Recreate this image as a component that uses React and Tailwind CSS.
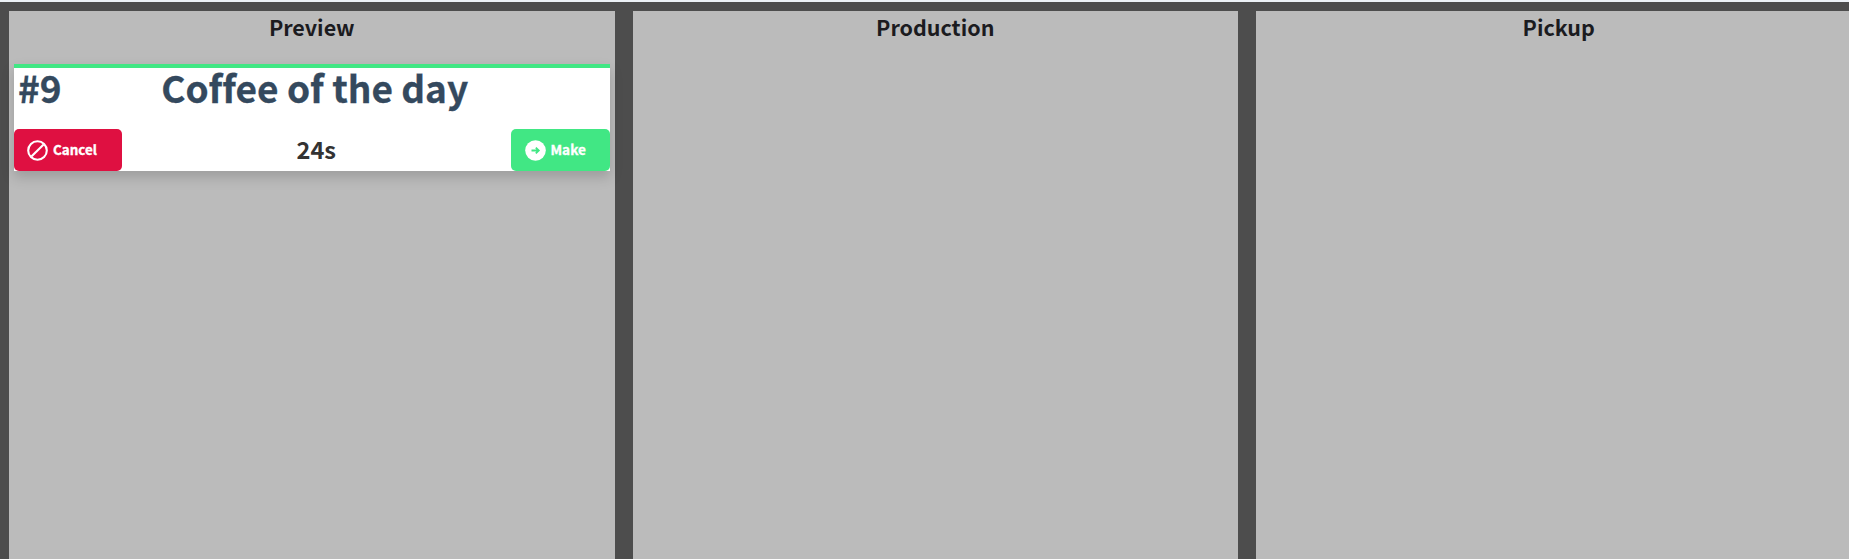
function CancelIcon() {
  return (
    <svg className="size-[21px] shrink-0" viewBox="0 0 21 21" fill="none" stroke="white" strokeWidth="2.1">
      <circle cx="10.5" cy="10.5" r="9.3" />
      <path d="M4.4 16.6 16.6 4.4" />
    </svg>
  );
}

function MakeIcon() {
  return (
    <svg className="size-[21px] shrink-0" viewBox="0 0 21 21" fill="none">
      <circle cx="10.5" cy="10.5" r="10.3" fill="white" />
      <path d="M6.5 10.5h7M10.8 7.6l3 2.9-3 2.9" stroke="#41e784" strokeWidth="1.8" />
    </svg>
  );
}

function Column({ title, children }) {
  return (
    <section className="w-[605.5px] shrink-0 bg-[#bbbbbb] px-[5px]">
      <h2 className="h-[53px] text-center text-[21.5px] leading-[31px] font-bold text-[#1b1b1f]">{title}</h2>
      {children}
    </section>
  );
}

function OrderCard() {
  return (
    <article className="h-[107px] border-t-4 border-[#41e784] bg-white shadow-[0_6px_12px_rgba(0,0,0,0.17)]">
      <div className="flex h-[61px] px-[4px] text-[37px] leading-[38px] font-bold text-[#34495e] [-webkit-text-stroke:0.3px_#34495e]">
        <span className="w-[55px]">#9</span>
        <span className="flex-1 pr-[49px] text-center [font-variant-ligatures:none]">Coffee of the day</span>
      </div>
      <div className="flex h-[42px] items-center justify-between">
        <button className="flex h-full w-[108px] items-center gap-[5px] rounded-[5px] bg-[#df1041] pl-[13px] text-[13.4px] leading-[20px] font-bold text-white [-webkit-text-stroke:0.35px_white]">
          <CancelIcon />
          <span className="pb-[2px]">Cancel</span>
        </button>
        <span className="pb-[2px] text-[23.6px] leading-[32px] font-bold text-[#333333]">24s</span>
        <button className="flex h-full w-[99px] items-center gap-[5px] rounded-[5px] bg-[#41e784] pl-[14px] text-[13.6px] leading-[20px] font-bold text-white [-webkit-text-stroke:0.35px_white]">
          <MakeIcon />
          <span className="pb-[2px]">Make</span>
        </button>
      </div>
    </article>
  );
}

export default function App() {
  return (
    <main className="flex h-[559px] gap-[18px] overflow-hidden border-t-2 border-[#edf2f7] bg-[#4d4d4d] pt-[9px] pl-[9px] font-['Noto_Sans_CJK_SC',sans-serif]">
      <Column title="Preview">
        <OrderCard />
      </Column>
      <Column title="Production" />
      <Column title="Pickup" />
    </main>
  );
}
